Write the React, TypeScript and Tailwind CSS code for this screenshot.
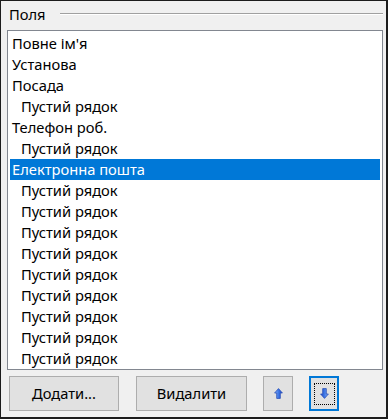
import React from "react";

type Item = { text: string; indent: boolean; selected?: boolean };

const items: Item[] = [
  { text: "Повне ім'я", indent: false },
  { text: "Установа", indent: false },
  { text: "Посада", indent: false },
  { text: "Пустий рядок", indent: true },
  { text: "Телефон роб.", indent: false },
  { text: "Пустий рядок", indent: true },
  { text: "Електронна пошта", indent: false, selected: true },
  { text: "Пустий рядок", indent: true },
  { text: "Пустий рядок", indent: true },
  { text: "Пустий рядок", indent: true },
  { text: "Пустий рядок", indent: true },
  { text: "Пустий рядок", indent: true },
  { text: "Пустий рядок", indent: true },
  { text: "Пустий рядок", indent: true },
  { text: "Пустий рядок", indent: true },
  { text: "Пустий рядок", indent: true },
];

function Arrow({ down }: { down?: boolean }) {
  return (
    <svg
      width="9"
      height="11"
      viewBox="0 0 9 11"
      style={down ? { transform: "rotate(180deg)" } : undefined}
    >
      <defs>
        <linearGradient id={down ? "gd" : "gu"} x1="0" y1="0" x2="1" y2="0">
          <stop offset="0" stopColor="#8fb8f6" />
          <stop offset="0.5" stopColor="#3f78e6" />
          <stop offset="1" stopColor="#1d47c2" />
        </linearGradient>
      </defs>
      <polygon
        points="4.5,0.6 8.4,5 6.3,5 6.3,10.4 2.7,10.4 2.7,5 0.6,5"
        fill={`url(#${down ? "gd" : "gu"})`}
        stroke="#2a4fb8"
        strokeWidth="0.8"
        strokeLinejoin="round"
      />
    </svg>
  );
}

export default function App() {
  return (
    <div className="w-[388px] h-[419px] box-border bg-[#f0f0f0] border-t border-l border-r-2 border-b-2 border-[#1c1c1c] font-['Noto_Sans',sans-serif] text-[14.7px] text-black overflow-hidden">
      <div className="flex items-center h-[20px] mt-[3px] mb-[6px] pl-[8px] pr-[3px]">
        <span className="leading-[20px]">Поля</span>
        <div className="flex-1 ml-[14px] h-[2px] border-t border-[#a0a0a0] border-b border-b-white" />
      </div>
      <div className="ml-[6px] w-[376px] h-[340px] box-border border border-[#828790] bg-white pt-[2px] px-[2px] overflow-hidden">
        {items.map((it, i) => (
          <div
            key={i}
            className={`h-[21px] leading-[21px] whitespace-nowrap ${
              it.indent ? "pl-[11px]" : "pl-[2px]"
            } ${it.selected ? "bg-[#0078d7] text-white" : ""}`}
          >
            {it.text}
          </div>
        ))}
      </div>
      <div className="flex items-start mt-[6px] pl-[8px]">
        <button className="w-[110px] h-[35px] box-border bg-[#e1e1e1] border border-[#adadad] flex items-center justify-center leading-none">
          Додати...
        </button>
        <button className="ml-[17px] w-[111px] h-[35px] box-border bg-[#e1e1e1] border border-[#adadad] flex items-center justify-center leading-none">
          Видалити
        </button>
        <button className="ml-[16px] w-[30px] h-[35px] box-border bg-[#e1e1e1] border border-[#adadad] flex items-center justify-center">
          <Arrow />
        </button>
        <button className="ml-[16px] w-[30px] h-[35px] box-border bg-[#e1e1e1] border-2 border-[#0078d7] flex items-center justify-center">
          <div className="w-[21px] h-[22px] box-border border border-dotted border-black flex items-center justify-center">
            <Arrow down />
          </div>
        </button>
      </div>
    </div>
  );
}
